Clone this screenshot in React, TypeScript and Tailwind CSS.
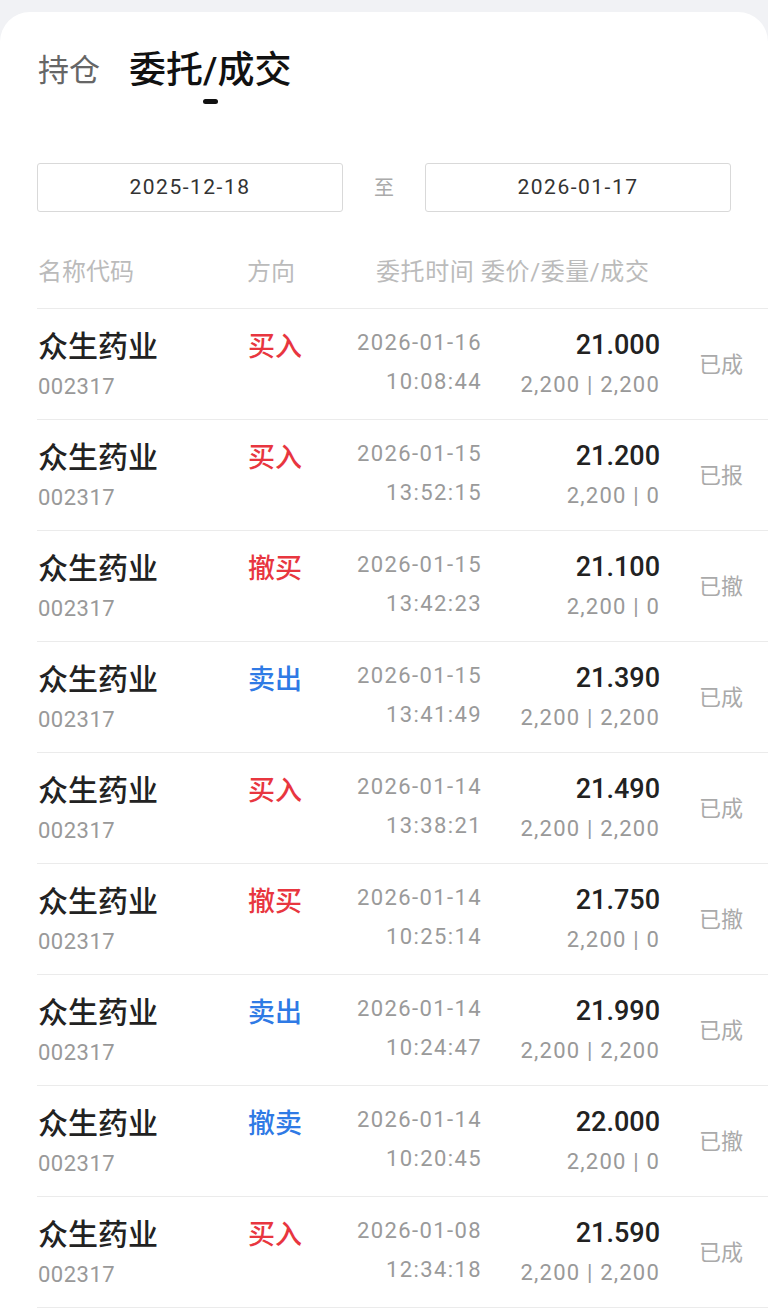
import React from "react";

type Order = {
  side: string;
  date: string;
  time: string;
  price: string;
  qty: string;
  status: string;
};

const orders: Order[] = [
  { side: "买入", date: "2026-01-16", time: "10:08:44", price: "21.000", qty: "2,200 | 2,200", status: "已成" },
  { side: "买入", date: "2026-01-15", time: "13:52:15", price: "21.200", qty: "2,200 | 0", status: "已报" },
  { side: "撤买", date: "2026-01-15", time: "13:42:23", price: "21.100", qty: "2,200 | 0", status: "已撤" },
  { side: "卖出", date: "2026-01-15", time: "13:41:49", price: "21.390", qty: "2,200 | 2,200", status: "已成" },
  { side: "买入", date: "2026-01-14", time: "13:38:21", price: "21.490", qty: "2,200 | 2,200", status: "已成" },
  { side: "撤买", date: "2026-01-14", time: "10:25:14", price: "21.750", qty: "2,200 | 0", status: "已撤" },
  { side: "卖出", date: "2026-01-14", time: "10:24:47", price: "21.990", qty: "2,200 | 2,200", status: "已成" },
  { side: "撤卖", date: "2026-01-14", time: "10:20:45", price: "22.000", qty: "2,200 | 0", status: "已撤" },
  { side: "买入", date: "2026-01-08", time: "12:34:18", price: "21.590", qty: "2,200 | 2,200", status: "已成" },
];

function OrderRow({ o }: { o: Order }) {
  const isBuy = o.side === "买入" || o.side === "撤买";
  return (
    <div className="flex h-[111px] border-b border-[#ebebeb] ml-[37px]">
      <div className="w-[211px] shrink-0 pl-[1px] pt-[18px] flex flex-col">
        <span className="text-[30px] leading-[40px] text-[#222] font-medium">众生药业</span>
        <span className="text-[22px] leading-[40px] text-[#999] tracking-[0.5px]">002317</span>
      </div>
      <div className="w-[100px] shrink-0 pt-[18px]">
        <span className={`text-[27px] leading-[40px] font-medium ${isBuy ? "text-[#e8363f]" : "text-[#2f7ae5]"}`}>
          {o.side}
        </span>
      </div>
      <div className="w-[134px] shrink-0 pt-[14px] flex flex-col items-end text-[22px] leading-[39px] text-[#9a9a9a] tracking-[1.4px]">
        <span>{o.date}</span>
        <span>{o.time}</span>
      </div>
      <div className="w-[178px] shrink-0 pt-[16px] flex flex-col items-end">
        <span className="text-[27px] leading-[40px] text-[#222] font-medium">{o.price}</span>
        <span className="text-[22px] leading-[40px] text-[#999] tracking-[1.2px] whitespace-pre">{o.qty}</span>
      </div>
      <div className="flex items-center pl-[39px] shrink-0">
        <span className="text-[22px] text-[#aaa] whitespace-nowrap">{o.status}</span>
      </div>
    </div>
  );
}

export default function App() {
  return (
    <div
      className="w-[768px] h-[1315px] overflow-hidden bg-[#f1f2f5] pt-[12px]"
      style={{ fontFamily: 'Roboto, "Noto Sans CJK SC", sans-serif' }}
    >
      <div className="bg-white rounded-t-[30px] h-full">
        {/* tabs */}
        <div className="flex items-start pt-[37px] pl-[38px] gap-[29px]">
          <span className="text-[31px] leading-[44px] text-[#666]">持仓</span>
          <div className="flex flex-col items-center">
            <span className="text-[37px] leading-[44px] text-[#111] font-medium">委托/成交</span>
            <span className="mt-[6px] w-[15px] h-[5px] rounded-full bg-[#111]"></span>
          </div>
        </div>

        {/* date range */}
        <div className="flex items-center mt-[59px] px-[37px]">
          <div className="w-[306px] h-[49px] border border-[#d9d9d9] rounded-[3px] flex items-center justify-center text-[21px] text-[#333] tracking-[1.5px]">
            2025-12-18
          </div>
          <span className="flex-1 text-center text-[20px] text-[#aaa]">至</span>
          <div className="w-[306px] h-[49px] border border-[#d9d9d9] rounded-[3px] flex items-center justify-center text-[21px] text-[#333] tracking-[1.5px]">
            2026-01-17
          </div>
        </div>

        {/* header */}
        <div className="flex ml-[37px] pl-[1px] mt-[45px] pb-[21px] border-b border-[#ebebeb] text-[24px] leading-[30px] text-[#bbb]">
          <span className="w-[209px] shrink-0">名称代码</span>
          <span className="w-[129px] shrink-0">方向</span>
          <span className="whitespace-nowrap tracking-[0.6px]">委托时间 委价/委量/成交</span>
        </div>

        {orders.map((o, i) => (
          <OrderRow key={i} o={o} />
        ))}
      </div>
    </div>
  );
}
